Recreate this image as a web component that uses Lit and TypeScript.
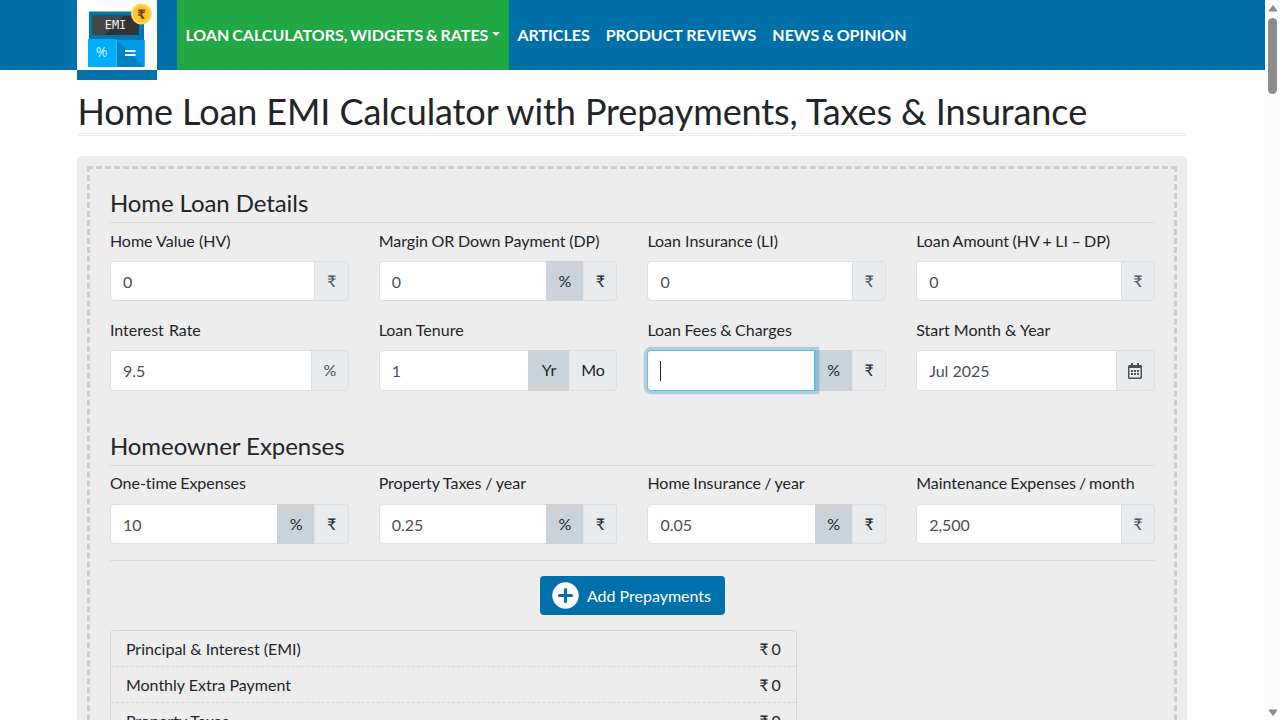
import { LitElement, html, css, nothing } from "lit";
import { customElement } from "lit/decorators.js";
import { classMap } from "lit/directives/class-map.js";
import { styleMap } from "lit/directives/style-map.js";

interface Unit {
  text: string;
  kind: "addon" | "option" | "active" | "calendar";
  size: "rupee" | "percent" | "percent-addon" | "year" | "month" | "date";
}
interface Field {
  label: string;
  value: string;
  units: Unit[];
  wordGap?: number;
  focused?: boolean;
}

const rupee: Unit = { text: "₹", kind: "addon", size: "rupee" };
const percentOrRupee: Unit[] = [
  { text: "%", kind: "active", size: "percent" },
  { text: "₹", kind: "option", size: "rupee" },
];

const loanRows: Field[][] = [
  [
    { label: "Home Value (HV)", value: "0", units: [rupee] },
    { label: "Margin OR Down Payment (DP)", value: "0", units: percentOrRupee, wordGap: -0.5 },
    { label: "Loan Insurance (LI)", value: "0", units: [rupee] },
    { label: "Loan Amount (HV + LI – DP)", value: "0", units: [rupee], wordGap: -0.7 },
  ],
  [
    { label: "Interest Rate", value: "9.5", units: [{ text: "%", kind: "addon", size: "percent-addon" }], wordGap: 1 },
    {
      label: "Loan Tenure",
      value: "1",
      units: [
        { text: "Yr", kind: "active", size: "year" },
        { text: "Mo", kind: "option", size: "month" },
      ],
    },
    { label: "Loan Fees & Charges", value: "", units: percentOrRupee, focused: true, wordGap: -0.6 },
    { label: "Start Month & Year", value: "Jul 2025", units: [{ text: "", kind: "calendar", size: "date" }] },
  ],
];

const expenses: Field[] = [
  { label: "One-time Expenses", value: "10", units: percentOrRupee, wordGap: -1 },
  { label: "Property Taxes / year", value: "0.25", units: percentOrRupee, wordGap: -0.3 },
  { label: "Home Insurance / year", value: "0.05", units: percentOrRupee, wordGap: -0.8 },
  { label: "Maintenance Expenses / month", value: "2,500", units: [rupee], wordGap: -1.2 },
];

const summary = ["Principal & Interest (EMI)", "Monthly Extra Payment", "Property Taxes"];

@customElement("app-field")
export class AppField extends LitElement {
  static properties = { field: { attribute: false } };
  declare field: Field;

  static styles = css`
    :host { display: block; min-width: 0; }
    .label {
      display: block; height: 24px; line-height: 24px; margin-bottom: var(--label-gap, 8px);
      color: #212529; white-space: nowrap;
    }
    .group { display: flex; height: 40.4px; }
    .input {
      flex: 1; min-width: 0; box-sizing: border-box; display: flex; align-items: center;
      padding: 0.6px 12px 0; background: #fff; border: 1px solid #dce0e3;
      border-radius: 4px 0 0 4px; color: #495057;
    }
    .focused {
      position: relative; z-index: 1; border-color: #5ebeec; padding-top: 0; margin-right: -1px;
      border-right-width: 2px; box-shadow: 0 0 0 3.2px rgba(0, 113, 170, 0.25);
    }
    .caret { width: 1px; height: 20px; background: #212529; }
    .unit {
      box-sizing: border-box; display: flex; align-items: center; justify-content: center;
      padding-bottom: 1.4px;
      background: #e8ecef; border: 1px solid #dce0e3; margin-left: -1px; color: #495057;
    }
    .focused + .unit { margin-left: 0; }
    .unit:last-child { border-radius: 0 4px 4px 0; }
    .option { color: #212529; border-left-color: #e1e5e9; }
    .active { color: #212529; background: #cbd3da; border-color: #cbd3da; }
    .calendar { padding-bottom: 0; }
    .rupee { width: 34.200px; }
    .percent { width: 38.400px; }
    .percent-addon { width: 37.600px; }
    .year { width: 41.600px; }
    .month { width: 48.600px; }
    .date { width: 39px; }
  `;

  render() {
    const f = this.field;
    const gap = { wordSpacing: `${f.wordGap ?? 0}px` };
    return html`
      <span class="label" style=${styleMap(gap)}>${f.label}</span>
      <div class="group">
        <div class=${classMap({ input: true, focused: !!f.focused })}>
          ${f.focused ? html`<span class="caret"></span>` : f.value}
        </div>
        ${f.units.map(
          (u) => html`<span class=${classMap({ unit: true, [u.kind]: true, [u.size]: true })}>
            ${u.kind === "calendar"
              ? html`<svg width="14" height="16" viewBox="0 0 448 512" fill="#495057">
                  <path d="M148 288h-40c-6.600 0-12-5.400-12-12v-40c0-6.600 5.400-12 12-12h40c6.600 0 12 5.400 12 12v40c0 6.600-5.400 12-12 12zm108-12v-40c0-6.600-5.400-12-12-12h-40c-6.600 0-12 5.400-12 12v40c0 6.600 5.400 12 12 12h40c6.600 0 12-5.400 12-12zm96 0v-40c0-6.600-5.400-12-12-12h-40c-6.600 0-12 5.400-12 12v40c0 6.600 5.400 12 12 12h40c6.600 0 12-5.400 12-12zm-96 96v-40c0-6.600-5.400-12-12-12h-40c-6.600 0-12 5.400-12 12v40c0 6.600 5.400 12 12 12h40c6.600 0 12-5.400 12-12zm-96 0v-40c0-6.600-5.400-12-12-12h-40c-6.600 0-12 5.400-12 12v40c0 6.600 5.400 12 12 12h40c6.600 0 12-5.400 12-12zm192 0v-40c0-6.600-5.400-12-12-12h-40c-6.600 0-12 5.400-12 12v40c0 6.600 5.400 12 12 12h40c6.600 0 12-5.400 12-12zm96-260v352c0 26.500-21.500 48-48 48H48c-26.500 0-48-21.500-48-48V112c0-26.500 21.500-48 48-48h48V12c0-6.600 5.400-12 12-12h40c6.600 0 12 5.400 12 12v52h128V12c0-6.600 5.400-12 12-12h40c6.600 0 12 5.400 12 12v52h48c26.500 0 48 21.500 48 48zm-48 346V160H48v298c0 3.300 2.700 6 6 6h340c3.300 0 6-2.700 6-6z" />
                </svg>`
              : u.text || nothing}
          </span>`
        )}
      </div>
    `;
  }
}

@customElement("app-root")
export class AppRoot extends LitElement {
  static styles = css`
    :host {
      display: flex; width: 1280px; height: 720px; overflow: hidden; background: #fff;
      font-family: Lato, "Open Sans", sans-serif; font-size: 16px; color: #212529;
      font-variant-ligatures: none;
    }
    .page { flex: 1; min-width: 0; height: 720px; overflow: hidden; }
    .header {
      height: 70px; display: flex; padding-left: 77.4px;
      background: repeating-linear-gradient(90deg, #0070a9 0 3px, #006ea7 3px 5px, #0070a9 5px 8px, #006fa8 8px 10px);
    }
    .logo { width: 80px; height: 80px; margin-right: 20px; flex: none; }
    .nav { display: flex; }
    .link {
      display: flex; align-items: center; padding: 0 8px 2px; color: #fff;
      font-weight: 700; white-space: nowrap;
    }
    .current {
      word-spacing: -1px; padding-right: 9px;
      background: repeating-linear-gradient(90deg, #21a744 0 3px, #21a543 3px 5px, #21a744 5px 8px, #21a644 8px 10px);
    }
    .last { word-spacing: -1px; }
    .arrow {
      margin: 0 0 0 4px; border-top: 4.800px solid #fff;
      border-left: 4.800px solid transparent; border-right: 4.800px solid transparent;
    }
    .main { width: 1110px; margin-left: 77.4px; }
    .title {
      margin: 20px 0 20px; height: 43px; line-height: 43px; font-size: 36px; font-weight: 400;
      border-bottom: 3px double #eee; white-space: nowrap; letter-spacing: -0.1px;
    }
    .panel { background: #ededed; border-radius: 4px; padding: 10px; height: 700px; box-sizing: border-box; }
    .form { border: 3px dashed #ccc; padding: 20px 19.5px; height: 680px; box-sizing: border-box; }
    .section {
      margin: 0; font-size: 24px; font-weight: 400; line-height: 27px; height: 33px;
      border-bottom: 1px solid #d9dadb; letter-spacing: -0.08px;
    }
    .second { margin-top: 41.2px; letter-spacing: -0.05px; }
    .grid { display: grid; grid-template-columns: repeat(4, 1fr); gap: 17px 30px; padding-top: 6px; }
    .tail { --label-gap: 8.6px; padding: 5px 0 16px; border-bottom: 1px solid #d9dadb; }
    .actions { display: flex; justify-content: center; padding: 15px 0 14.5px; }
    .button {
      box-sizing: border-box; width: 185px; height: 39.5px; display: flex; align-items: center;
      padding: 0 12px; gap: 8px; background: #0071aa; border-radius: 4px; color: #fff; white-space: nowrap;
    }
    .table { width: 687px; box-sizing: border-box; border: 1px solid #d5d6d7; border-radius: 4px; }
    .row {
      display: flex; justify-content: space-between; align-items: center; height: 35.1px;
      padding: 0 15px; border-bottom: 1px dashed #d8d8d8;
    }
    .amount { word-spacing: -1px; }
    .scrollbar {
      width: 15px; height: 720px; box-sizing: border-box; background: #fcfcfc; display: flex;
      flex-direction: column; align-items: center; padding: 4px 0 3px;
    }
    .thumb { width: 9px; height: 76px; border-radius: 5px; background: #8b8b8b; margin-top: 6px; }
    .down { margin-top: auto; }
  `;

  renderLogo() {
    return html`<svg class="logo" viewBox="0 0 80 80">
      <rect width="80" height="70" fill="#fff" />
      <rect y="70" width="80" height="10" fill="#0071aa" />
      <rect x="12" y="11.500" width="55" height="28.500" fill="#0075af" />
      <rect x="15.500" y="15.500" width="46.500" height="19.500" fill="#333" />
      <path d="M15.500 15.500H47L27 35H15.500z" fill="#474747" />
      <rect x="11" y="39" width="28.500" height="28" fill="#00aeff" />
      <rect x="39.500" y="40" width="28" height="27" fill="#0082c3" />
      <path d="M39.500 40h28v27z" fill="#0099e5" />
      <text x="38.500" y="29" text-anchor="middle" fill="#f4f4f4" font-family="DejaVu Sans Mono, monospace" font-size="11.800">EMI</text>
      <text x="24.500" y="57" text-anchor="middle" fill="#d8f2ff" font-family="Open Sans, sans-serif" font-size="14">%</text>
      <path d="M48 51h10.500M48 55h10.500" stroke="#fff" stroke-width="1.800" />
      <circle cx="64.500" cy="14" r="10.500" fill="#ffd85c" />
      <circle cx="64.500" cy="14" r="8.500" fill="#ffc72c" />
      <text x="64.500" y="18.500" text-anchor="middle" fill="#7a421c" font-family="DejaVu Sans, sans-serif" font-weight="700" font-size="13">₹</text>
    </svg>`;
  }

  renderFields(fields: Field[]) {
    return fields.map((f) => html`<app-field .field=${f}></app-field>`);
  }

  render() {
    return html`
      <div class="page">
        <header class="header">
          ${this.renderLogo()}
          <nav class="nav">
            <span class="link current">LOAN CALCULATORS, WIDGETS &amp; RATES<i class="arrow"></i></span>
            <span class="link">ARTICLES</span>
            <span class="link">PRODUCT REVIEWS</span>
            <span class="link last">NEWS &amp; OPINION</span>
          </nav>
        </header>
        <main class="main">
          <h1 class="title">Home Loan EMI Calculator with Prepayments, Taxes &amp; Insurance</h1>
          <div class="panel">
            <div class="form">
              <h2 class="section">Home Loan Details</h2>
              <div class="grid">${loanRows.map((r) => this.renderFields(r))}</div>
              <h2 class="section second">Homeowner Expenses</h2>
              <div class="grid tail">${this.renderFields(expenses)}</div>
              <div class="actions">
                <div class="button">
                  <svg width="27" height="27" viewBox="0 0 27 27">
                    <circle cx="13.500" cy="13.500" r="13.200" fill="#fff" />
                    <path d="M13.500 7.500v12M7.500 13.500h12" stroke="#0071aa" stroke-width="3.200" stroke-linecap="round" />
                  </svg>
                  <span>Add Prepayments</span>
                </div>
              </div>
              <div class="table">
                ${summary.map((s) => html`<div class="row"><span>${s}</span><span class="amount">₹ 0</span></div>`)}
              </div>
            </div>
          </div>
        </main>
      </div>
      <div class="scrollbar">
        <svg width="10" height="8" viewBox="0 0 10 8"><path d="M5 1.500L9 7H1z" fill="#8b8b8b" stroke="#8b8b8b" stroke-linejoin="round" /></svg>
        <div class="thumb"></div>
        <svg class="down" width="10" height="8" viewBox="0 0 10 8"><path d="M5 6.500L9 1H1z" fill="#8b8b8b" stroke="#8b8b8b" stroke-linejoin="round" /></svg>
      </div>
    `;
  }
}
